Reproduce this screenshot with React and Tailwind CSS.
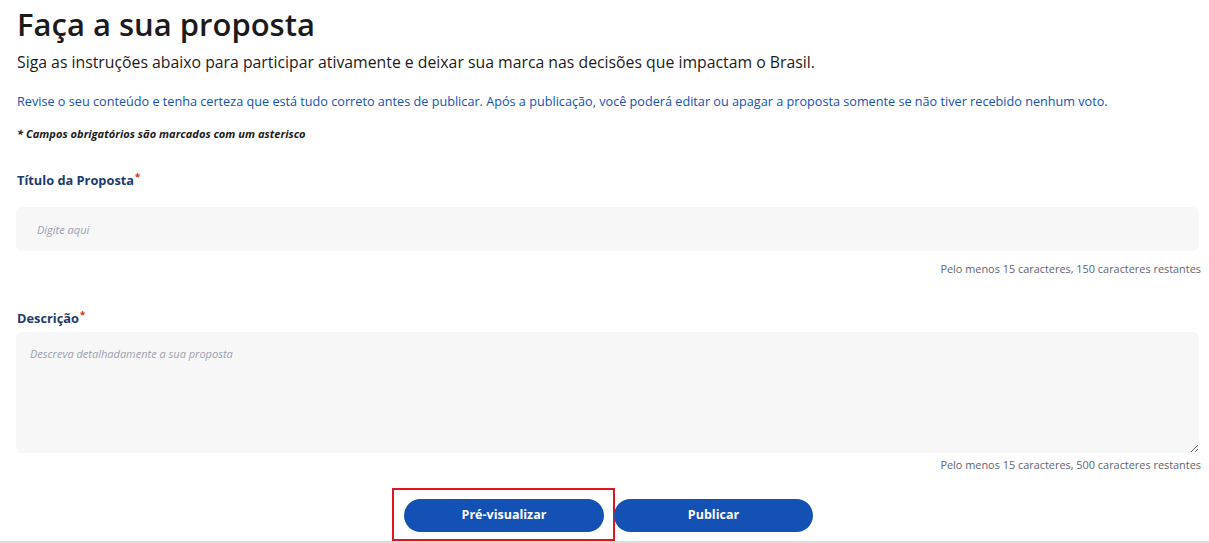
import React from "react";

const App = () => {
  return (
    <div className="w-[1209px] h-[543px] bg-white overflow-hidden relative font-['Open_Sans',sans-serif]">
      <div className="px-[17px]">
        {/* Heading */}
        <h1 className="pt-[2px] text-[31px] leading-[44px] font-semibold text-[#1b1b1b]">
          Faça a sua proposta
        </h1>
        <p className="mt-[4px] text-[15.8px] leading-[24px] text-[#1b1b1b]">
          Siga as instruções abaixo para participar ativamente e deixar sua marca nas decisões que impactam o Brasil.
        </p>
        <p className="mt-[17px] text-[12.66px] leading-[20px] text-[#1351b4]">
          Revise o seu conteúdo e tenha certeza que está tudo correto antes de publicar. Após a publicação, você poderá editar ou apagar a proposta somente se não tiver recebido nenhum voto.
        </p>
        <p className="mt-[15px] text-[11.1px] leading-[16px] font-bold italic text-[#1b1b1b]">
          * Campos obrigatórios são marcados com um asterisco
        </p>

        {/* Título */}
        <label className="block mt-[29px] text-[12.8px] leading-[18px] font-bold text-[#1c3b6e]">
          Título da Proposta<sup className="text-[#e52207] ml-[1px]">*</sup>
        </label>
        <div className="mt-[18px] -ml-[1px] -mr-[7px]">
          <input
            type="text"
            placeholder="Digite aqui"
            className="block w-full h-[44px] rounded-[6px] bg-[#f7f7f7] px-[21px] text-[11px] italic placeholder:text-[#9a9fae] outline-none"
          />
        </div>
        <div className="mt-[11px] text-right -mr-[9px] text-[10.9px] leading-[14px] text-[#5d6473]">
          Pelo menos 15 caracteres, 150 caracteres restantes
        </div>

        {/* Descrição */}
        <label className="block mt-[33px] text-[12.8px] leading-[18px] font-bold text-[#1c3b6e]">
          Descrição<sup className="text-[#e52207] ml-[1px]">*</sup>
        </label>
        <div className="mt-[5px] -ml-[1px] -mr-[7px]">
          <textarea
            placeholder="Descreva detalhadamente a sua proposta"
            className="block w-full h-[121px] rounded-[6px] bg-[#f7f7f7] px-[14px] py-[14px] text-[11px] italic placeholder:text-[#9a9fae] outline-none resize-y"
          />
        </div>
        <div className="mt-[5px] text-right -mr-[9px] text-[10.9px] leading-[14px] text-[#5d6473]">
          Pelo menos 15 caracteres, 500 caracteres restantes
        </div>

        {/* Buttons */}
        <div className="mt-[16px] flex justify-start pl-[375px]">
          <div className="border-2 border-[#e0161f] w-[223px] h-[53px] flex items-start pt-[9px] pl-[10px]">
            <button className="w-[200px] h-[33px] rounded-full bg-[#1351b4] text-white text-[12.5px] font-bold">
              Pré-visualizar
            </button>
          </div>
          <button className="mt-[11px] -ml-[1px] w-[199px] h-[33px] rounded-full bg-[#1351b4] text-white text-[12.5px] font-bold">
            Publicar
          </button>
        </div>
      </div>
      <div className="absolute left-0 right-0 bottom-0 h-[2px] bg-[#dcdcdc]"></div>
    </div>
  );
};

export default App;
